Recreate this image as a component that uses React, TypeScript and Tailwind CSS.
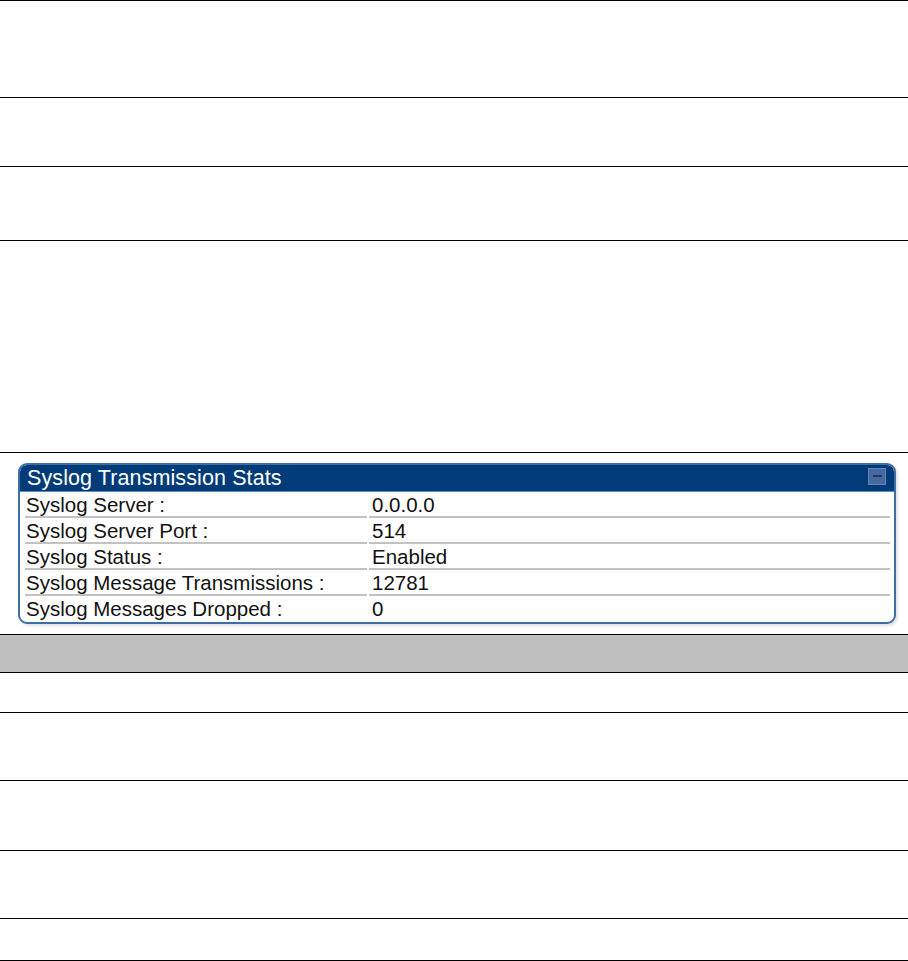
import React from "react";

const stats = [
  { label: "Syslog Server :", value: "0.0.0.0" },
  { label: "Syslog Server Port :", value: "514" },
  { label: "Syslog Status :", value: "Enabled" },
  { label: "Syslog Message Transmissions :", value: "12781" },
  { label: "Syslog Messages Dropped :", value: "0" },
];

const SyslogPanel = () => (
  <div className="ml-[18px] w-[878px] h-[161px] rounded-[9px] border-2 border-[#3d6ea6] bg-white overflow-hidden shadow-[2px_2px_3px_rgba(0,0,0,0.12)]">
    <div className="h-[27px] bg-[#023c78] border-b border-[#5f8cc0] flex items-center justify-between pl-[7px] pr-[8px]">
      <span className="text-white text-[21.5px] leading-[26px] tracking-[0.1px]">Syslog Transmission Stats</span>
      <span className="w-[18px] h-[17px] mt-[-4px] bg-[#46699f] border border-[#6384b8] flex items-center justify-center">
        <span className="block w-[9px] h-[2px] bg-[#1d3c6c]" />
      </span>
    </div>
    <div className="pl-[5px] pr-[4px]">
      {stats.map((row, i) => (
        <div key={row.label} className="grid grid-cols-[342px_1fr] gap-x-[2px]">
          <div
            className={`h-[26px] pl-[1px] text-[20.5px] leading-[26px] text-[#111] ${
              i < stats.length - 1 ? "border-b-2 border-[#c2c2c2]" : ""
            }`}
          >
            {row.label}
          </div>
          <div
            className={`h-[26px] pl-[3px] text-[20.5px] leading-[26px] text-[#111] ${
              i < stats.length - 1 ? "border-b-2 border-[#c2c2c2]" : ""
            }`}
          >
            {row.value}
          </div>
        </div>
      ))}
    </div>
  </div>
);

export default function App() {
  return (
    <div className="w-[908px] h-[961px] bg-white font-['Liberation_Sans',Arial,sans-serif] border-t border-black">
      <div className="h-[97px] border-b border-black" />
      <div className="h-[69px] border-b border-black" />
      <div className="h-[74px] border-b border-black" />
      <div className="h-[212px] border-b border-black" />
      <div className="h-[182px] border-b border-black pt-[10px]">
        <SyslogPanel />
      </div>
      <div className="h-[38px] border-b border-black bg-[#bfbfbf]" />
      <div className="h-[40px] border-b border-black" />
      <div className="h-[68px] border-b border-black" />
      <div className="h-[70px] border-b border-black" />
      <div className="h-[68px] border-b border-black" />
      <div className="h-[42px] border-b border-black" />
    </div>
  );
}
